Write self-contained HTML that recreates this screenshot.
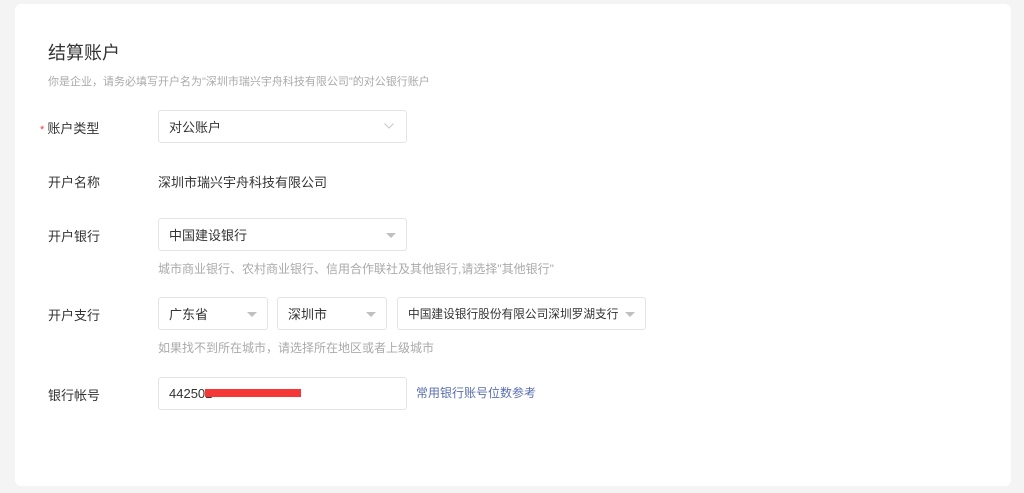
<!DOCTYPE html>
<html><head><meta charset="utf-8"><style>
*{box-sizing:border-box;margin:0;padding:0}
body{width:1024px;height:493px;background:#f4f4f5;font-family:"Liberation Sans","Noto Sans CJK SC",sans-serif;position:relative;overflow:hidden;color:#333}
.card{position:absolute;left:15px;top:4px;width:996px;height:482px;background:#fff;border-radius:6px}
.a{position:absolute;white-space:nowrap}
.lbl{font-size:13px;color:#333}
.box{position:absolute;border:1px solid #e4e4e4;border-radius:3px;background:#fff;font-size:13px;color:#333;padding-left:10px;display:flex;align-items:center;white-space:nowrap;overflow:hidden}
.tri{position:absolute;right:10px;top:14px;width:0;height:0;border-left:5px solid transparent;border-right:5px solid transparent;border-top:5px solid #c0c0c0}
.hint{font-size:12px;color:#aaa}
</style></head><body>
<div class="card"></div>
<div class="a" style="left:48px;top:39px;font-size:18px;color:#333">结算账户</div>
<div class="a hint" style="left:48px;top:73px;font-size:11px">你是企业，请务必填写开户名为"深圳市瑞兴宇舟科技有限公司"的对公银行账户</div>
<div class="a lbl" style="left:40px;top:118px"><span style="color:#f04040;font-size:11px">* </span>账户类型</div>
<div class="box" style="left:158px;top:110px;width:249px;height:33px">对公账户<svg style="position:absolute;right:12px;top:12px" width="10" height="6" viewBox="0 0 10 6"><path d="M0.5 0.5L5 5L9.5 0.5" fill="none" stroke="#c8c8c8"/></svg></div>
<div class="a lbl" style="left:48px;top:172px">开户名称</div>
<div class="a lbl" style="left:158px;top:172px">深圳市瑞兴宇舟科技有限公司</div>
<div class="a lbl" style="left:48px;top:226px">开户银行</div>
<div class="box" style="left:158px;top:218px;width:249px;height:33px">中国建设银行<i class="tri"></i></div>
<div class="a hint" style="left:158px;top:260px">城市商业银行、农村商业银行、信用合作联社及其他银行,请选择"其他银行"</div>
<div class="a lbl" style="left:48px;top:305px">开户支行</div>
<div class="box" style="left:158px;top:297px;width:110px;height:33px">广东省<i class="tri"></i></div>
<div class="box" style="left:277px;top:297px;width:110px;height:33px">深圳市<i class="tri"></i></div>
<div class="box" style="left:397px;top:297px;width:249px;height:33px"><span style="font-size:11.7px">中国建设银行股份有限公司深圳罗湖支行</span><i class="tri"></i></div>
<div class="a hint" style="left:158px;top:339px">如果找不到所在城市，请选择所在地区或者上级城市</div>
<div class="a lbl" style="left:48px;top:385px">银行帐号</div>
<div class="box" style="left:158px;top:377px;width:249px;height:33px">442501</div>
<div class="a" style="left:205px;top:389px;width:96px;height:8px;background:#f63737"></div>
<div class="a" style="left:416px;top:384px;font-size:12px;color:#5a6fb0">常用银行账号位数参考</div>
</body></html>
